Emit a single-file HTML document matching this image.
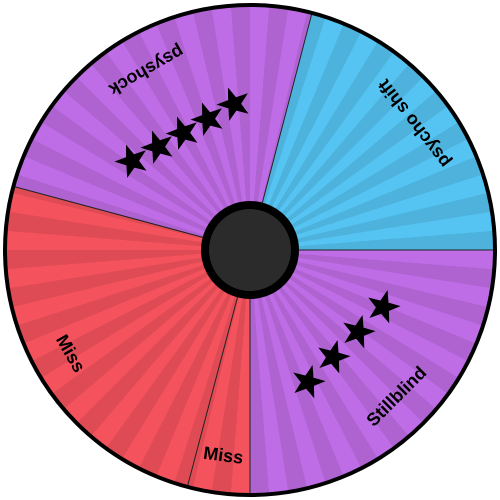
<!DOCTYPE html>
<html><head><style>
html,body{margin:0;padding:0;background:#fff;width:500px;height:500px;overflow:hidden}
.w{position:absolute;left:4px;top:4px;width:492px;height:492px;border-radius:50%;
background:
repeating-conic-gradient(from 0deg,rgba(0,0,0,0) 0deg 4.5deg,rgba(0,0,0,0.09) 4.5deg 9deg),
conic-gradient(from 0deg,#bf6de6 0deg 14.7deg,#55c4f2 14.7deg 90deg,#bf6de6 90deg 180deg,#f4525c 180deg 285deg,#bf6de6 285deg 360deg);}
svg{position:absolute;left:0;top:0}
text{font-family:"Liberation Sans",sans-serif;font-size:18px;font-weight:bold;fill:#000}
</style></head><body>
<div class="w"></div>
<svg width="500" height="500" viewBox="0 0 500 500">
<defs><polygon id="st" transform="scale(1.35)" points="0,-13 3.1,-4.2 12.4,-4 5,1.6 7.6,10.5 0,5.2 -7.6,10.5 -5,1.6 -12.4,-4 -3.1,-4.2"/></defs>
<g stroke="#222" stroke-width="1">
<line x1="250" y1="250" x2="312" y2="13"/>
<line x1="250" y1="250" x2="496" y2="250"/>
<line x1="250" y1="250" x2="250" y2="496"/>
<line x1="250" y1="250" x2="187" y2="488"/>
<line x1="250" y1="250" x2="12" y2="186"/>
</g>
<circle cx="250" cy="250" r="245" fill="none" stroke="#000" stroke-width="4"/>
<circle cx="250" cy="250" r="45" fill="#2b2b2b" stroke="#000" stroke-width="8"/>
<g transform="rotate(330 250 250) rotate(180 250 43)"><text x="250" y="43" text-anchor="middle" dominant-baseline="central">psyshock</text></g>
<g transform="rotate(52.4 250 250) rotate(180 250 43)"><text x="250" y="43" text-anchor="middle" dominant-baseline="central">psycho shift</text></g>
<g transform="rotate(135 250 250) rotate(180 250 43)"><text x="250" y="43" text-anchor="middle" dominant-baseline="central">Stillblind</text></g>
<g transform="rotate(187.4 250 250) rotate(180 250 43)"><text x="250" y="43" text-anchor="middle" dominant-baseline="central">Miss</text></g>
<g transform="rotate(240 250 250) rotate(180 250 43)"><text x="250" y="43" text-anchor="middle" dominant-baseline="central">Miss</text></g>
<g fill="#000">
<use href="#st" transform="translate(132 161) rotate(-20)"/>
<use href="#st" transform="translate(158 147) rotate(-20)"/>
<use href="#st" transform="translate(183 133) rotate(-20)"/>
<use href="#st" transform="translate(208 119) rotate(-20)"/>
<use href="#st" transform="translate(234 104) rotate(-20)"/>
<use href="#st" transform="translate(308 382) rotate(15)"/>
<use href="#st" transform="translate(333 357) rotate(15)"/>
<use href="#st" transform="translate(358 332) rotate(15)"/>
<use href="#st" transform="translate(383 307) rotate(15)"/>
</g>
</svg>
</body></html>
